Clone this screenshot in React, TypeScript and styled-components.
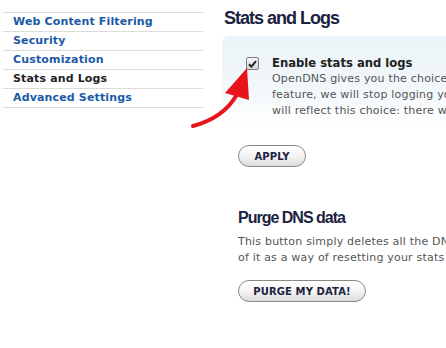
import React from 'react';
import styled, { createGlobalStyle } from 'styled-components';

const Global = createGlobalStyle`
  html, body { margin: 0; padding: 0; background: #fff; }
  body { font-family: "DejaVu Sans", Verdana, sans-serif; overflow: hidden; }
`;

const Page = styled.div`
  position: relative;
  display: flex;
  align-items: flex-start;
  width: 446px;
  height: 348px;
  overflow: hidden;
`;

const Sidebar = styled.ul`
  list-style: none;
  margin: 12px 0 0 3px;
  padding: 0;
  width: 200px;
  flex: none;
  border-top: 1px solid #dcdcdc;
`;

const NavItem = styled.li<{ $active?: boolean }>`
  height: 18px;
  line-height: 18px;
  border-bottom: 1px solid #dcdcdc;
  padding-left: 10px;
  font-size: 11px;
  font-weight: bold;
  letter-spacing: 0.15px;
  color: ${(p) => (p.$active ? '#222' : '#1b5aa6')};
  white-space: nowrap;
`;

const Main = styled.main`
  flex: none;
  width: 320px;
  margin-left: 19px;
  padding-top: 7px;
`;

const Title = styled.h1`
  margin: 0 0 0 2px;
  font-family: "Liberation Sans", Arial, sans-serif;
  font-size: 18px;
  line-height: 22px;
  letter-spacing: -1px;
  font-weight: bold;
  color: #1b2340;
`;

const Panel = styled.section`
  margin-top: 7px;
  padding: 19px 0 6px 24px;
  border-radius: 7px 0 0 0;
  background: linear-gradient(180deg, #ecf4f8 0%, #f1f7fa 55%, #ffffff 100%);
  display: flex;
  align-items: flex-start;
  gap: 13px;
`;

const Check = styled.span`
  flex: none;
  margin-top: 2px;
  width: 11px;
  height: 11px;
  border: 1px solid #7d7d7d;
  border-radius: 2px;
  background: linear-gradient(180deg, #f6f6f6, #d6d6d6);
  display: flex;
  align-items: center;
  justify-content: center;
`;

const PanelBody = styled.div`
  white-space: nowrap;
`;

const OptionTitle = styled.div`
  font-size: 11.6px;
  font-weight: bold;
  line-height: 16px;
  color: #222;
`;

const Desc = styled.p`
  margin: 0;
  font-size: 11px;
  line-height: 16px;
  letter-spacing: 0.2px;
  color: #555;
  white-space: nowrap;
`;

const Section = styled.div<{ $top: number }>`
  padding-left: 16px;
  margin-top: ${(p) => p.$top}px;
`;

const SubTitle = styled.h2`
  margin: 0 0 6px 0;
  font-family: "Liberation Sans", Arial, sans-serif;
  font-size: 16px;
  line-height: 20px;
  letter-spacing: -1px;
  font-weight: bold;
  color: #1b2340;
`;

const PillButton = styled.button<{ $w: number }>`
  display: block;
  width: ${(p) => p.$w}px;
  height: 22px;
  padding: 0;
  border: 1px solid #8a8a8a;
  border-radius: 11px;
  background: linear-gradient(180deg, #ffffff 0%, #f4f4f4 50%, #dcdcdc 100%);
  font-family: "DejaVu Sans", Verdana, sans-serif;
  font-size: 10px;
  font-weight: bold;
  color: #1b2340;
  letter-spacing: 0.1px;
  cursor: pointer;
`;

const Arrow = styled.svg`
  position: absolute;
  left: 185px;
  top: 60px;
  overflow: visible;
`;

export default function App() {
  return (
    <Page>
      <Global />
      <Sidebar>
        <NavItem>Web Content Filtering</NavItem>
        <NavItem>Security</NavItem>
        <NavItem>Customization</NavItem>
        <NavItem $active>Stats and Logs</NavItem>
        <NavItem>Advanced Settings</NavItem>
      </Sidebar>
      <Main>
        <Title>Stats and Logs</Title>
        <Panel>
          <Check>
            <svg width="9" height="8" viewBox="0 0 9 8">
              <path d="M1 4.2 L3.4 6.6 L8 1.2" fill="none" stroke="#222" strokeWidth="2" />
            </svg>
          </Check>
          <PanelBody>
            <OptionTitle>Enable stats and logs</OptionTitle>
            <Desc>OpenDNS gives you the choice to turn this</Desc>
            <Desc>feature, we will stop logging your DNS</Desc>
            <Desc>will reflect this choice: there will be no</Desc>
          </PanelBody>
        </Panel>
        <Section $top={20}>
          <PillButton $w={68}>APPLY</PillButton>
        </Section>
        <Section $top={41}>
          <SubTitle>Purge DNS data</SubTitle>
          <Desc>This button simply deletes all the DNS</Desc>
          <Desc>of it as a way of resetting your stats</Desc>
        </Section>
        <Section $top={14}>
          <PillButton $w={128}>PURGE MY DATA!</PillButton>
        </Section>
      </Main>
      <Arrow width="70" height="75" viewBox="0 0 70 75">
        <path d="M8 66 Q38 58 51 36" fill="none" stroke="#e8141c" strokeWidth="4" strokeLinecap="round" />
        <polygon points="62,8 40,33 64,40" fill="#e8141c" />
      </Arrow>
    </Page>
  );
}
